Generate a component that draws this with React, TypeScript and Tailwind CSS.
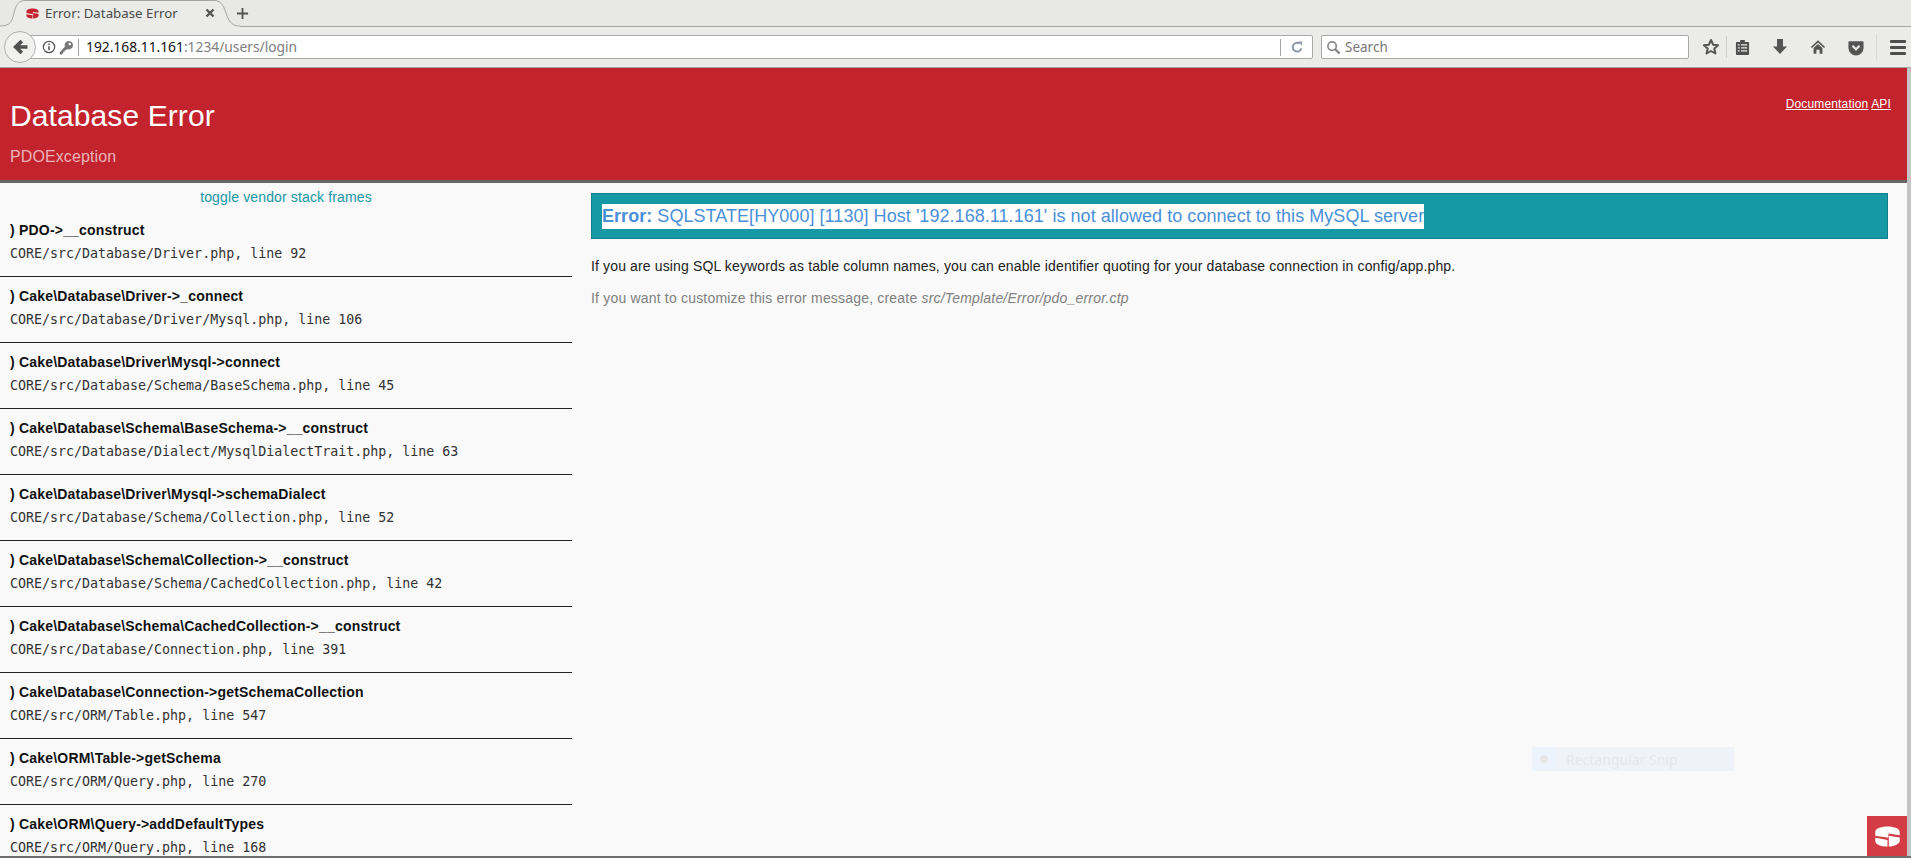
const frames = [
  ["PDO->__construct", "CORE/src/Database/Driver.php, line 92"],
  ["Cake\\Database\\Driver->_connect", "CORE/src/Database/Driver/Mysql.php, line 106"],
  ["Cake\\Database\\Driver\\Mysql->connect", "CORE/src/Database/Schema/BaseSchema.php, line 45"],
  ["Cake\\Database\\Schema\\BaseSchema->__construct", "CORE/src/Database/Dialect/MysqlDialectTrait.php, line 63"],
  ["Cake\\Database\\Driver\\Mysql->schemaDialect", "CORE/src/Database/Schema/Collection.php, line 52"],
  ["Cake\\Database\\Schema\\Collection->__construct", "CORE/src/Database/Schema/CachedCollection.php, line 42"],
  ["Cake\\Database\\Schema\\CachedCollection->__construct", "CORE/src/Database/Connection.php, line 391"],
  ["Cake\\Database\\Connection->getSchemaCollection", "CORE/src/ORM/Table.php, line 547"],
  ["Cake\\ORM\\Table->getSchema", "CORE/src/ORM/Query.php, line 270"],
  ["Cake\\ORM\\Query->addDefaultTypes", "CORE/src/ORM/Query.php, line 168"],
];

function CakeLogo({ className, color }: { className: string; color: string }) {
  return (
    <svg viewBox="0 0 30 24" className={className} fill={color}>
      <path d="M1 7C1 3 7 .5 15 .5S29 3 29 7V10.500L16 8.500V13.500L1 11z" />
      <path d="M1 13.500 15 16V23.500C7 23.500 1 20.500 1 17z" />
      <path d="M16.500 11 29 13V17C29 20 23 23 16.500 23.500z" />
    </svg>
  );
}

function Toolbar() {
  return (
    <div className="flex h-[41px] items-center border-b border-[#a6a6a6] bg-[#ebebe9] pl-[4px]">
      {/* back button overlaps the url bar */}
      <div className="relative z-10 -mr-[7px] flex h-[32px] w-[32px] shrink-0 items-center justify-center rounded-full border border-[#b0b0b0] bg-[#f1f1ef]">
        <svg viewBox="0 0 16 16" className="h-[16px] w-[16px]" fill="#505050">
          <path d="M8.500.8l2.700 2.700L8 6.200h7.500v3.600H8l3.200 2.700-2.700 2.700L1 8z" />
        </svg>
      </div>
      <div className="flex h-[24px] w-[1284px] shrink-0 items-center rounded-r-[2px] border border-[#a9a9a9] bg-white pl-[12px]">
        <svg viewBox="0 0 16 16" className="h-[14px] w-[14px] shrink-0" fill="none" stroke="#555" strokeWidth="1.400">
          <circle cx="8" cy="8" r="6.500" />
          <path d="M8 7v4.500M8 4v1.600" strokeWidth="1.800" />
        </svg>
        <svg viewBox="0 0 16 16" className="ml-[3px] h-[15px] w-[15px] shrink-0" fill="#777">
          <path d="M10.500 1a4.500 4.500 0 1 1-1.700 8.700L7.500 11H6v1.500H4.500V14L3 15.500H.8V13L6.300 7.200A4.500 4.500 0 0 1 10.500 1zm1 2a1.300 1.300 0 1 0 0 2.600 1.300 1.300 0 0 0 0-2.600z" />
        </svg>
        <div className="ml-[4px] h-[17px] w-px bg-[#a0a0a0]" />
        <div className="ml-[7px] flex-1 font-['Noto_Sans',sans-serif] text-[13.8px] text-[#808080]">
          <span className="text-[#111]">192.168.11.161</span>:1234/users/login
        </div>
        <div className="h-[17px] w-px bg-[#a0a0a0]" />
        <div className="flex w-[31px] justify-center">
          <svg viewBox="0 0 16 16" className="h-[14px] w-[14px]" fill="none" stroke="#8c97a6" strokeWidth="2.200">
            <path d="M13 9.500A5 5 0 1 1 11 4" />
            <path d="M9.500 1.500 14 2 13.500 6.500z" fill="#8c97a6" stroke="none" />
          </svg>
        </div>
      </div>
      <div className="ml-[8px] flex h-[24px] w-[368px] shrink-0 items-center rounded-[2px] border border-[#a9a9a9] bg-white pl-[4px]">
        <svg viewBox="0 0 16 16" className="h-[15px] w-[15px]" fill="none" stroke="#8a8a8a" strokeWidth="1.800">
          <circle cx="6.500" cy="6.500" r="4.500" />
          <path d="M10 10l4.500 4.500" strokeWidth="2.400" />
        </svg>
        <span className="ml-[4px] font-['Noto_Sans',sans-serif] text-[13.5px] text-[#777]">Search</span>
      </div>
      <div className="ml-[13px] flex w-[18px] shrink-0 justify-center">
        <svg viewBox="0 0 18 18" className="h-[18px] w-[18px]" fill="none" stroke="#555" strokeWidth="2" strokeLinejoin="round">
          <path d="M9 2l2.100 4.700 5 .5-3.800 3.300 1.100 5L9 13l-4.400 2.500 1.100-5L1.900 7.200l5-.5z" />
        </svg>
      </div>
      <div className="ml-[6px] h-[22px] w-px bg-[#cfcfcd]" />
      <div className="ml-[7px] flex w-[16px] shrink-0 justify-center">
        <svg viewBox="0 0 16 18" className="h-[17px] w-[15px]">
          <path d="M5.500 1h5v2H14a1 1 0 0 1 1 1v12a1 1 0 0 1-1 1H2a1 1 0 0 1-1-1V4a1 1 0 0 1 1-1h3.500z" fill="#505050" />
          <path d="M3 6.200h2M6.500 6.200H13M3 9.400h2M6.500 9.400H13M3 12.600h2M6.500 12.600H13" stroke="#ebebe9" strokeWidth="1.300" />
        </svg>
      </div>
      <div className="ml-[22px] flex w-[16px] shrink-0 justify-center">
        <svg viewBox="0 0 16 18" className="h-[18px] w-[16px]" fill="#555">
          <path d="M5 1h6v7.500h4L8 16 1 8.500h4z" />
        </svg>
      </div>
      <div className="ml-[22px] flex w-[16px] shrink-0 justify-center">
        <svg viewBox="0 0 18 18" className="h-[18px] w-[17px]" fill="#555">
          <path d="M9 1.500l8 7.500-1.300 1.200L9 4 2.300 10.200 1 9z" />
          <path d="M4 10.200 9 5.700l5 4.500v6.300h-3.200v-4.500H7.200v4.500H4z" />
        </svg>
      </div>
      <div className="ml-[22px] flex w-[16px] shrink-0 justify-center">
        <svg viewBox="0 0 18 18" className="h-[17px] w-[17px]">
          <path d="M1.500 2h15a1 1 0 0 1 1 1v6.500a8.500 8.500 0 0 1-17 0V3a1 1 0 0 1 1-1z" fill="#555" />
          <path d="M5 7l4 4 4-4" fill="none" stroke="#ebebe9" strokeWidth="2.400" />
        </svg>
      </div>
      <div className="ml-[12px] h-[26px] w-px bg-[#d9d9d7]" />
      <div className="ml-[13px] flex flex-col gap-[3px]">
        <div className="h-[3px] w-[16px] rounded-[1px] bg-[#4e4e4e]" />
        <div className="h-[3px] w-[16px] rounded-[1px] bg-[#4e4e4e]" />
        <div className="h-[3px] w-[16px] rounded-[1px] bg-[#4e4e4e]" />
      </div>
    </div>
  );
}

export default function App() {
  return (
    <div className="relative flex h-screen w-full flex-col overflow-hidden bg-[#f9f9f9] font-['Liberation_Sans',Arial,sans-serif] text-[#222]">
      {/* tab strip */}
      <div className="flex h-[27px] shrink-0 border-b border-[#a6a6a6] bg-[#e8e8e6]">
        <div className="relative -mb-px flex h-[27px] w-[240px] shrink-0 items-center pl-[26px]">
          <svg viewBox="0 0 240 27" className="absolute inset-0 h-[27px] w-[240px]">
            <path d="M0 26C10 26 12 22 14 13 16 4 19 .5 26 .5H214C220 .5 223 4 226 13 229 22 232 26 240 26V27H0z" fill="#ebebe9" />
            <path d="M0 26C10 26 12 22 14 13 16 4 19 .5 26 .5H214C220 .5 223 4 226 13 229 22 232 26 240 26" fill="none" stroke="#a6a6a6" />
          </svg>
          <CakeLogo className="relative h-[11px] w-[13px]" color="#c3232d" />
          <span className="relative ml-[6px] font-['Noto_Sans',sans-serif] text-[13.3px] text-[#4a4a4a]">Error: Database Error</span>
          <svg viewBox="0 0 10 10" className="absolute left-[205px] top-[8px] h-[10px] w-[10px]" stroke="#555" strokeWidth="2.400">
            <path d="M1.500 1.500l7 7M8.500 1.500l-7 7" />
          </svg>
        </div>
        <svg viewBox="0 0 14 14" className="mt-[7px] ml-[-4px] h-[13px] w-[13px]" stroke="#555" strokeWidth="2">
          <path d="M7 1v12M1 7h12" />
        </svg>
      </div>
      <Toolbar />

      <div className="flex min-h-0 flex-1 border-b-2 border-[#6e6e6e]">
        <div className="flex min-w-0 flex-1 flex-col">
          {/* header */}
          <header className="flex h-[115px] shrink-0 items-start justify-between border-b-[3px] border-[#666] bg-[#c3232d] pl-[10px] pr-[16px]">
            <div>
              <h1 className="mt-[30px] text-[30px] leading-[36px] tracking-[0.1px] text-white">Database Error</h1>
              <p className="mt-[14px] text-[16px] leading-[18px] tracking-[0.1px] text-[#eab4b8]">PDOException</p>
            </div>
            <div className="mt-[29px] text-[12px] leading-[14px] tracking-[0.15px] text-white">
              <a className="underline">Documentation</a> <a className="underline">API</a>
            </div>
          </header>

          <div className="flex min-h-0 flex-1">
            <div className="w-[572px] shrink-0">
              <div className="h-[28px] pt-[6px] text-center text-[14px] leading-[16px] tracking-[0.14px] text-[#1798a5]">toggle vendor stack frames</div>
              {frames.map(([name, file]) => (
                <div key={file + name} className="h-[66px] border-b border-[#222] pl-[10px] pt-[11px]">
                  <div className="text-[14px] font-bold leading-[16px] tracking-[0.2px] text-[#111]">) {name}</div>
                  <div className="mt-[8px] font-['DejaVu_Sans_Mono',monospace] text-[13.3px] leading-[16px] text-[#333]">{file}</div>
                </div>
              ))}
            </div>
            <div className="min-w-0 flex-1 pl-[19px] pr-[19px] pt-[10px]">
              <div className="flex h-[46px] items-center border border-[#0f7f8b] bg-[#1798a5] pl-[10px]">
                <span className="bg-white text-[18px] leading-[25px] tracking-[0.05px] text-[#4a90d9]">
                  <strong>Error:</strong> SQLSTATE[HY000] [1130] Host '192.168.11.161' is not allowed to connect to this MySQL server
                </span>
              </div>
              <p className="mt-[17px] text-[14px] leading-[20px] tracking-[0.135px] text-[#222]">
                If you are using SQL keywords as table column names, you can enable identifier quoting for your database connection in config/app.php.
              </p>
              <p className="mt-[12px] text-[14px] leading-[20px] tracking-[0.19px] text-[#808080]">
                If you want to customize this error message, create <em>src/Template/Error/pdo_error.ctp</em>
              </p>
            </div>
          </div>
        </div>
        {/* scrollbar sliver */}
        <div className="w-[4px] shrink-0 bg-[#c4c4c4]" />
      </div>

      {/* ghost of a snipping tool menu */}
      <div className="absolute left-[1532px] top-[747px] flex h-[24px] w-[202px] items-center bg-[#eff3f8]">
        <div className="flex h-full w-[24px] items-center justify-center bg-[#ecf3fa]">
          <div className="h-[8px] w-[8px] rounded-full bg-[#e4e6e8]" />
        </div>
        <span className="ml-[10px] font-['Noto_Sans',sans-serif] text-[14px] text-[#e6e8ea]">Rectangular Snip</span>
      </div>

      {/* cake toolbar button */}
      <div className="absolute left-[1867px] top-[816px] flex h-[40px] w-[40px] items-center justify-center bg-[#d33c44]">
        <CakeLogo className="h-[21px] w-[27px]" color="#ffffff" />
      </div>
    </div>
  );
}
